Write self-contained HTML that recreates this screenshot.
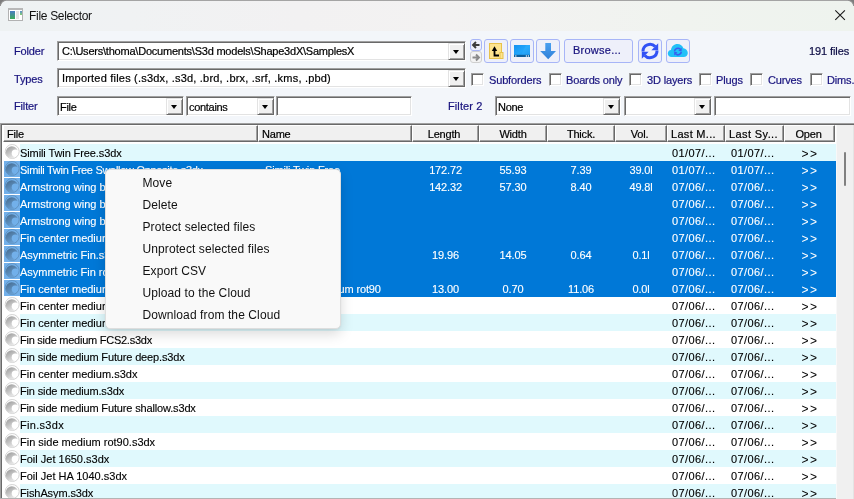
<!DOCTYPE html>
<html><head><meta charset="utf-8">
<style>
*{box-sizing:border-box;margin:0;padding:0}
html,body{width:854px;height:499px;overflow:hidden;background:#8e8e8e}
body{position:relative;font-family:"Liberation Sans",sans-serif;font-size:11px;color:#000}
.lbl,.sunk .t,.hc{-webkit-text-stroke:0.2px currentColor}
.row .c{-webkit-text-stroke:0.12px currentColor}
.a{position:absolute}
#win{position:absolute;left:0;top:0;width:854px;height:499px;background:#f3f6fa;overflow:hidden}
#title{position:absolute;left:0;top:0;width:854px;height:31px;border-top:1px solid #a4a4a4;background:linear-gradient(90deg,#eef2f3 0%,#f0f2f3 15%,#f2f1f2 35%,#f3f2f2 52%,#f0f3ef 80%,#eef3ee 100%)}
.lbl{position:absolute;color:#18137e;font-size:11px;letter-spacing:-0.15px;white-space:nowrap;line-height:13px}
.sunk{position:absolute;background:#fff;border-top:1px solid #a0a0a0;border-left:1px solid #a0a0a0;border-right:1px solid #fff;border-bottom:1px solid #fff;box-shadow:inset 1px 1px 0 #696969,inset -1px -1px 0 #e3e3e3}
.sunk .t{position:absolute;left:2px;top:4px;font-size:11px;letter-spacing:-0.3px;white-space:nowrap;line-height:13px}
.ddb{position:absolute;right:0;top:1px;width:17px;bottom:0;background:#f0f0f0;border-top:1px solid #e3e3e3;border-left:1px solid #e3e3e3;border-right:1px solid #696969;border-bottom:1px solid #696969;box-shadow:inset 1px 1px 0 #fff,inset -1px -1px 0 #a0a0a0}
.ddb:after{content:"";position:absolute;left:4px;top:6px;border-left:3.5px solid transparent;border-right:3.5px solid transparent;border-top:4px solid #000}
.btn{position:absolute;background:#eef0fa;border:1px solid #a7b5f7;border-radius:3px}
.chk{position:absolute;width:13px;height:13px;background:#fff;border-top:1px solid #a0a0a0;border-left:1px solid #a0a0a0;border-right:1px solid #fff;border-bottom:1px solid #fff;box-shadow:inset 1px 1px 0 #696969,inset -1px -1px 0 #e3e3e3}

#tbl{position:absolute;left:0px;top:123px;width:854px;height:376px;background:#fff;border-top:1px solid #a0a0a0;border-left:1px solid #a0a0a0;box-shadow:inset 1px 1px 0 #696969}
.hc{position:absolute;top:125px;height:17px;background:#f0f0f0;border-top:1px solid #fff;border-left:1px solid #fff;border-right:1px solid #696969;border-bottom:1px solid #696969;box-shadow:inset -1px -1px 0 #a0a0a0;font-size:11px;line-height:17px;letter-spacing:-0.2px;white-space:nowrap;color:#000}
#sb{position:absolute;left:836px;top:125px;width:18px;height:374px;background:#f0f0f0}
.row{position:absolute;left:3px;width:833px;height:17px}
.row .c{position:absolute;top:3px;font-size:11px;line-height:13px;letter-spacing:-0.15px;white-space:nowrap}
.row .cc{text-align:center}
.row .dt{letter-spacing:0.4px}
.row .gg{letter-spacing:1.4px;text-indent:0px;font-size:12px;top:3.5px;-webkit-text-stroke:0}
.rc{background:linear-gradient(90deg,#fff 17px,#e0f9fd 17px)}
.rw{background:#fff}
.rs{background:linear-gradient(90deg,#fff 17px,#0078d7 17px);color:#fff}
.row .ic{position:absolute;left:1px;top:0;width:16px;height:17px}
.rs .ic{background:#72b0ea;top:0;height:16px}
.row .ic svg{position:absolute;left:0;top:0}
.rs .ic svg{mix-blend-mode:multiply}

#menu{position:absolute;left:105px;top:169px;width:236px;height:160px;background:#f9f9f9;border:1px solid #dedede;border-radius:5px;box-shadow:0 5px 13px rgba(0,0,0,0.15),0 1px 2px rgba(0,0,0,0.05)}
#menu div{position:absolute;left:36.5px;font-size:12px;line-height:17px;letter-spacing:0.1px;color:#111;white-space:nowrap}
</style></head><body>
<svg width="0" height="0" style="position:absolute"><defs><linearGradient id="ig" x1="0" y1="0" x2="0.6" y2="1"><stop offset="0" stop-color="#969696"/><stop offset="1" stop-color="#ececec"/></linearGradient><mask id="wm"><rect width="16" height="16" fill="#fff"/><circle cx="11.4" cy="9.3" r="3.7" fill="#000"/></mask><g id="wico"><circle cx="8.2" cy="7.5" r="7" fill="#fff" stroke="#c8c8c8" stroke-width="0.8"/><circle cx="7.9" cy="8.3" r="6.1" fill="url(#ig)" mask="url(#wm)"/></g></defs></svg>
<div id="win">
  <div id="title"></div>
  <div class="a" style="left:0;top:0;width:6px;height:6px;background:radial-gradient(circle at 6px 6px,transparent 4.6px,#9c9c9c 5.2px,#7c7c7c 6.5px)"></div>
  <div class="a" style="left:848px;top:0;width:6px;height:6px;background:radial-gradient(circle at 0px 6px,transparent 4.6px,#9c9c9c 5.2px,#7c7c7c 6.5px)"></div>
  <!-- title icon -->
  <div class="a" style="left:8px;top:8px;width:15px;height:13px;background:#fff;border:1px solid #b2b2b2;border-top:2px solid #b8b8b8"></div>
  <div class="a" style="left:10px;top:11px;width:5px;height:8px;background:linear-gradient(180deg,#4a7cc4,#3cab58)"></div>
  <div class="a" style="left:16px;top:11px;width:3px;height:8px;background:#e4e4e4"></div>
  <div class="a" style="left:20px;top:11px;width:2px;height:4px;background:linear-gradient(180deg,#5a90d0,#86d070)"></div>
  <div class="a" style="left:29px;top:9px;font-size:12px;line-height:15px;letter-spacing:-0.3px;color:#111;white-space:nowrap">File Selector</div>
  <svg class="a" style="left:834px;top:9px" width="13" height="13" viewBox="0 0 13 13"><path d="M1.3 1.3L10.9 10.9M10.9 1.3L1.3 10.9" stroke="#1a1a1a" stroke-width="1.1"/></svg>

  <!-- row 1 -->
  <div class="lbl" style="left:14px;top:45px">Folder</div>
  <div class="sunk" style="left:57px;top:41px;width:409px;height:20px"><div class="t" style="left:4px;top:3px;letter-spacing:-0.22px">C:\Users\thoma\Documents\S3d models\Shape3dX\SamplesX</div><div class="ddb"></div></div>
  <div class="btn" style="left:470px;top:39px;width:12px;height:12px"></div>
  <div class="btn" style="left:470px;top:51px;width:12px;height:12px;border-color:#cfcfcf;background:#f3f3f3"></div>
  <div class="btn" style="left:484px;top:39px;width:24px;height:24px"></div>
  <div class="btn" style="left:510px;top:39px;width:24px;height:24px"></div>
  <div class="btn" style="left:536px;top:39px;width:24px;height:24px"></div>
  <div class="btn" style="left:564px;top:39px;width:69px;height:24px"></div>
  <div class="lbl" style="left:573px;top:44px;letter-spacing:0.25px">Browse...</div>
  <div class="btn" style="left:638px;top:39px;width:24px;height:24px"></div>
  <div class="btn" style="left:666px;top:39px;width:24px;height:24px"></div>

  <svg class="a" style="left:470px;top:39px" width="12" height="12" viewBox="0 0 12 12"><path d="M9.5 6H3.2M6 3L3 6L6 9" stroke="#3c3c3c" stroke-width="1.9" fill="none" stroke-linejoin="miter"/></svg>
  <svg class="a" style="left:470px;top:51px" width="12" height="12" viewBox="0 0 12 12"><path d="M2.5 6.5H8.8M6 3.5L9 6.5L6 9.5" stroke="#8a8a8a" stroke-width="1.9" fill="none"/></svg>
  <svg class="a" style="left:484px;top:39px" width="24" height="24" viewBox="0 0 24 24">
    <rect x="5.5" y="4.5" width="12" height="15" fill="#fde48f" stroke="#e7c24c" stroke-width="1"/>
    <rect x="16" y="13.5" width="3" height="6" fill="#fde48f" stroke="#e7c24c" stroke-width="1"/>
    <path d="M10.5 11V16.5H15" stroke="#000" stroke-width="1.8" fill="none"/>
    <path d="M7.8 12L10.5 7.2L13.2 12Z" fill="#000"/>
  </svg>
  <svg class="a" style="left:510px;top:39px" width="24" height="24" viewBox="0 0 24 24">
    <defs><linearGradient id="mg" x1="0" y1="0" x2="1" y2="1"><stop offset="0" stop-color="#1590f0"/><stop offset="0.5" stop-color="#22a6fb"/><stop offset="1" stop-color="#1288e8"/></linearGradient></defs>
    <rect x="4" y="6" width="16" height="12" fill="url(#mg)"/><path d="M11 16L16 6H20V16Z" fill="#3ab4ff" opacity="0.35"/>
    <rect x="4" y="15.8" width="16" height="2.2" fill="#0b5e9e"/>
    <rect x="5.2" y="16.4" width="1.2" height="1.2" fill="#fff"/><rect x="15.8" y="16.4" width="1.2" height="1.2" fill="#fff"/><rect x="17.8" y="16.4" width="1.2" height="1.2" fill="#fff"/>
  </svg>
  <svg class="a" style="left:536px;top:39px" width="24" height="24" viewBox="0 0 24 24">
    <defs><linearGradient id="dg" x1="0" y1="0" x2="0" y2="1"><stop offset="0" stop-color="#4aa0f0"/><stop offset="1" stop-color="#2f80d8"/></linearGradient></defs>
    <path d="M9.3 4H15V12H20L12.2 20.2L4.2 12H9.3Z" fill="url(#dg)"/>
  </svg>
  <svg class="a" style="left:638px;top:39px" width="24" height="24" viewBox="0 0 24 24">
    <path d="M5 12.5A7 7 0 0 1 17.2 7.6" stroke="#3152f5" stroke-width="3" fill="none"/>
    <path d="M20.2 4.2V11.2H13.4Z" fill="#3152f5"/>
    <path d="M19 11.5A7 7 0 0 1 6.8 16.4" stroke="#3152f5" stroke-width="3" fill="none"/>
    <path d="M3.8 19.8V12.8H10.6Z" fill="#3152f5"/>
  </svg>
  <svg class="a" style="left:666px;top:39px" width="24" height="24" viewBox="0 0 24 24">
    <path d="M5.5 18C3.3 18 1.8 16.4 1.8 14.5C1.8 12.6 3.2 11.1 5 11C5.3 7.6 8 5 11.5 5C14.3 5 16.6 6.7 17.4 9.2C19.8 9.5 21.8 11.5 21.8 13.9C21.8 16.2 20 18 17.6 18Z" fill="#22c0f7"/>
    <path d="M8.5 12.5A3.4 3.4 0 0 1 14.2 10.2" stroke="#3a5cf0" stroke-width="1.6" fill="none"/>
    <path d="M15.6 8.6V12H12.4Z" fill="#3a5cf0"/>
    <path d="M15.3 12.6A3.4 3.4 0 0 1 9.6 14.9" stroke="#3a5cf0" stroke-width="1.6" fill="none"/>
    <path d="M8.2 16.4V13H11.4Z" fill="#3a5cf0"/>
  </svg>
  <div class="lbl" style="left:809px;top:45px;letter-spacing:-0.1px;color:#0c0c44">191 files</div>
  <!-- row 2 -->
  <div class="lbl" style="left:14px;top:73px">Types</div>
  <div class="sunk" style="left:57px;top:68px;width:409px;height:20px"><div class="t" style="left:4px;top:3px;letter-spacing:0.2px">Imported files (.s3dx, .s3d, .brd, .brx, .srf, .kms, .pbd)</div><div class="ddb"></div></div>
  <div class="chk" style="left:471px;top:73px"></div><div class="lbl" style="left:489px;top:74px;letter-spacing:-0.15px">Subforders</div>
  <div class="chk" style="left:549px;top:73px"></div><div class="lbl" style="left:566px;top:74px;letter-spacing:-0.15px">Boards only</div>
  <div class="chk" style="left:629px;top:73px"></div><div class="lbl" style="left:647px;top:74px;letter-spacing:-0.15px">3D layers</div>
  <div class="chk" style="left:699px;top:73px"></div><div class="lbl" style="left:716px;top:74px;letter-spacing:-0.15px">Plugs</div>
  <div class="chk" style="left:750px;top:73px"></div><div class="lbl" style="left:768px;top:74px;letter-spacing:-0.15px">Curves</div>
  <div class="chk" style="left:810px;top:73px"></div><div class="lbl" style="left:827px;top:74px;letter-spacing:-0.15px">Dims.</div>
  <!-- row 3 -->
  <div class="lbl" style="left:14px;top:100px">Filter</div>
  <div class="sunk" style="left:57px;top:96px;width:127px;height:20px"><div class="t">File</div><div class="ddb"></div></div>
  <div class="sunk" style="left:186px;top:96px;width:89px;height:20px"><div class="t">contains</div><div class="ddb"></div></div>
  <div class="sunk" style="left:276px;top:96px;width:136px;height:20px"></div>
  <div class="lbl" style="left:448px;top:100px;letter-spacing:0.1px">Filter 2</div>
  <div class="sunk" style="left:495px;top:96px;width:126px;height:20px"><div class="t">None</div><div class="ddb"></div></div>
  <div class="sunk" style="left:624px;top:96px;width:88px;height:20px"><div class="ddb"></div></div>
  <div class="sunk" style="left:714px;top:96px;width:137px;height:20px"></div>
<div id="tbl"></div>
<div class="hc" style="left:3px;width:255px;text-align:left;padding-left:3px;">File</div>
<div class="hc" style="left:258px;width:154px;text-align:left;padding-left:3px;">Name</div>
<div class="hc" style="left:412px;width:67px;text-align:center;text-indent:-3px;">Length</div>
<div class="hc" style="left:479px;width:68px;text-align:center;">Width</div>
<div class="hc" style="left:547px;width:68px;text-align:center;">Thick.</div>
<div class="hc" style="left:615px;width:52px;text-align:center;text-indent:-3px;">Vol.</div>
<div class="hc" style="left:667px;width:58px;text-align:left;padding-left:3px;letter-spacing:0.3px;">Last M...</div>
<div class="hc" style="left:725px;width:59px;text-align:left;padding-left:3px;letter-spacing:0.4px;">Last Sy...</div>
<div class="hc" style="left:784px;width:51px;text-align:center;text-indent:-2px;">Open</div>
<div class="row rc" style="top:144px"><div class="ic"><svg width="16" height="16" viewBox="0 0 16 16"><use href="#wico"/></svg></div>
<span class="c" style="left:17px;letter-spacing:-0.1px">Simili Twin Free.s3dx</span>
<span class="c dt" style="left:669px">01/07/...</span>
<span class="c dt" style="left:728px">01/07/...</span>
<span class="c cc gg" style="left:781px;width:52px">&gt;&gt;</span>
</div>
<div class="row rs" style="top:161px"><div class="ic"><svg width="16" height="16" viewBox="0 0 16 16"><use href="#wico"/></svg></div>
<span class="c" style="left:17px;letter-spacing:-0.3px">Simili Twin Free Swallow Opposite.s3dx</span>
<span class="c" style="left:262px">Simili Twin Free</span>
<span class="c cc" style="left:409px;width:67px">172.72</span>
<span class="c cc" style="left:476px;width:68px">55.93</span>
<span class="c cc" style="left:544px;width:68px">7.39</span>
<span class="c cc" style="left:612px;width:52px">39.0l</span>
<span class="c dt" style="left:669px">01/07/...</span>
<span class="c dt" style="left:728px">01/07/...</span>
<span class="c cc gg" style="left:781px;width:52px">&gt;&gt;</span>
</div>
<div class="row rs" style="top:178px"><div class="ic"><svg width="16" height="16" viewBox="0 0 16 16"><use href="#wico"/></svg></div>
<span class="c" style="left:17px;letter-spacing:0px">Armstrong wing b</span>
<span class="c cc" style="left:409px;width:67px">142.32</span>
<span class="c cc" style="left:476px;width:68px">57.30</span>
<span class="c cc" style="left:544px;width:68px">8.40</span>
<span class="c cc" style="left:612px;width:52px">49.8l</span>
<span class="c dt" style="left:669px">07/06/...</span>
<span class="c dt" style="left:728px">07/06/...</span>
<span class="c cc gg" style="left:781px;width:52px">&gt;&gt;</span>
</div>
<div class="row rs" style="top:195px"><div class="ic"><svg width="16" height="16" viewBox="0 0 16 16"><use href="#wico"/></svg></div>
<span class="c" style="left:17px;letter-spacing:0px">Armstrong wing b</span>
<span class="c dt" style="left:669px">07/06/...</span>
<span class="c dt" style="left:728px">07/06/...</span>
<span class="c cc gg" style="left:781px;width:52px">&gt;&gt;</span>
</div>
<div class="row rs" style="top:212px"><div class="ic"><svg width="16" height="16" viewBox="0 0 16 16"><use href="#wico"/></svg></div>
<span class="c" style="left:17px;letter-spacing:0px">Armstrong wing b</span>
<span class="c dt" style="left:669px">07/06/...</span>
<span class="c dt" style="left:728px">07/06/...</span>
<span class="c cc gg" style="left:781px;width:52px">&gt;&gt;</span>
</div>
<div class="row rs" style="top:229px"><div class="ic"><svg width="16" height="16" viewBox="0 0 16 16"><use href="#wico"/></svg></div>
<span class="c" style="left:17px;letter-spacing:0px">Fin center medium</span>
<span class="c dt" style="left:669px">07/06/...</span>
<span class="c dt" style="left:728px">07/06/...</span>
<span class="c cc gg" style="left:781px;width:52px">&gt;&gt;</span>
</div>
<div class="row rs" style="top:246px"><div class="ic"><svg width="16" height="16" viewBox="0 0 16 16"><use href="#wico"/></svg></div>
<span class="c" style="left:17px;letter-spacing:0px">Asymmetric Fin.s3dx</span>
<span class="c cc" style="left:409px;width:67px">19.96</span>
<span class="c cc" style="left:476px;width:68px">14.05</span>
<span class="c cc" style="left:544px;width:68px">0.64</span>
<span class="c cc" style="left:612px;width:52px">0.1l</span>
<span class="c dt" style="left:669px">07/06/...</span>
<span class="c dt" style="left:728px">07/06/...</span>
<span class="c cc gg" style="left:781px;width:52px">&gt;&gt;</span>
</div>
<div class="row rs" style="top:263px"><div class="ic"><svg width="16" height="16" viewBox="0 0 16 16"><use href="#wico"/></svg></div>
<span class="c" style="left:17px;letter-spacing:0px">Asymmetric Fin rot90.s3dx</span>
<span class="c dt" style="left:669px">07/06/...</span>
<span class="c dt" style="left:728px">07/06/...</span>
<span class="c cc gg" style="left:781px;width:52px">&gt;&gt;</span>
</div>
<div class="row rs" style="top:280px"><div class="ic"><svg width="16" height="16" viewBox="0 0 16 16"><use href="#wico"/></svg></div>
<span class="c" style="left:17px;letter-spacing:0px">Fin center medium rot90.s3dx</span>
<span class="c" style="left:262px">Fin center medium rot90</span>
<span class="c cc" style="left:409px;width:67px">13.00</span>
<span class="c cc" style="left:476px;width:68px">0.70</span>
<span class="c cc" style="left:544px;width:68px">11.06</span>
<span class="c cc" style="left:612px;width:52px">0.0l</span>
<span class="c dt" style="left:669px">07/06/...</span>
<span class="c dt" style="left:728px">07/06/...</span>
<span class="c cc gg" style="left:781px;width:52px">&gt;&gt;</span>
</div>
<div class="row rw" style="top:297px"><div class="ic"><svg width="16" height="16" viewBox="0 0 16 16"><use href="#wico"/></svg></div>
<span class="c" style="left:17px;letter-spacing:0px">Fin center medium</span>
<span class="c dt" style="left:669px">07/06/...</span>
<span class="c dt" style="left:728px">07/06/...</span>
<span class="c cc gg" style="left:781px;width:52px">&gt;&gt;</span>
</div>
<div class="row rc" style="top:314px"><div class="ic"><svg width="16" height="16" viewBox="0 0 16 16"><use href="#wico"/></svg></div>
<span class="c" style="left:17px;letter-spacing:0px">Fin center medium</span>
<span class="c dt" style="left:669px">07/06/...</span>
<span class="c dt" style="left:728px">07/06/...</span>
<span class="c cc gg" style="left:781px;width:52px">&gt;&gt;</span>
</div>
<div class="row rw" style="top:331px"><div class="ic"><svg width="16" height="16" viewBox="0 0 16 16"><use href="#wico"/></svg></div>
<span class="c" style="left:17px;letter-spacing:-0.25px">Fin side medium FCS2.s3dx</span>
<span class="c dt" style="left:669px">07/06/...</span>
<span class="c dt" style="left:728px">07/06/...</span>
<span class="c cc gg" style="left:781px;width:52px">&gt;&gt;</span>
</div>
<div class="row rc" style="top:348px"><div class="ic"><svg width="16" height="16" viewBox="0 0 16 16"><use href="#wico"/></svg></div>
<span class="c" style="left:17px;letter-spacing:-0.15px">Fin side medium Future deep.s3dx</span>
<span class="c dt" style="left:669px">07/06/...</span>
<span class="c dt" style="left:728px">07/06/...</span>
<span class="c cc gg" style="left:781px;width:52px">&gt;&gt;</span>
</div>
<div class="row rw" style="top:365px"><div class="ic"><svg width="16" height="16" viewBox="0 0 16 16"><use href="#wico"/></svg></div>
<span class="c" style="left:17px;letter-spacing:0px">Fin center medium.s3dx</span>
<span class="c dt" style="left:669px">07/06/...</span>
<span class="c dt" style="left:728px">07/06/...</span>
<span class="c cc gg" style="left:781px;width:52px">&gt;&gt;</span>
</div>
<div class="row rc" style="top:382px"><div class="ic"><svg width="16" height="16" viewBox="0 0 16 16"><use href="#wico"/></svg></div>
<span class="c" style="left:17px;letter-spacing:-0.15px">Fin side medium.s3dx</span>
<span class="c dt" style="left:669px">07/06/...</span>
<span class="c dt" style="left:728px">07/06/...</span>
<span class="c cc gg" style="left:781px;width:52px">&gt;&gt;</span>
</div>
<div class="row rw" style="top:399px"><div class="ic"><svg width="16" height="16" viewBox="0 0 16 16"><use href="#wico"/></svg></div>
<span class="c" style="left:17px;letter-spacing:-0.15px">Fin side medium Future shallow.s3dx</span>
<span class="c dt" style="left:669px">07/06/...</span>
<span class="c dt" style="left:728px">07/06/...</span>
<span class="c cc gg" style="left:781px;width:52px">&gt;&gt;</span>
</div>
<div class="row rc" style="top:416px"><div class="ic"><svg width="16" height="16" viewBox="0 0 16 16"><use href="#wico"/></svg></div>
<span class="c" style="left:17px;letter-spacing:0.3px">Fin.s3dx</span>
<span class="c dt" style="left:669px">07/06/...</span>
<span class="c dt" style="left:728px">07/06/...</span>
<span class="c cc gg" style="left:781px;width:52px">&gt;&gt;</span>
</div>
<div class="row rw" style="top:433px"><div class="ic"><svg width="16" height="16" viewBox="0 0 16 16"><use href="#wico"/></svg></div>
<span class="c" style="left:17px;letter-spacing:0px">Fin side medium rot90.s3dx</span>
<span class="c dt" style="left:669px">07/06/...</span>
<span class="c dt" style="left:728px">07/06/...</span>
<span class="c cc gg" style="left:781px;width:52px">&gt;&gt;</span>
</div>
<div class="row rc" style="top:450px"><div class="ic"><svg width="16" height="16" viewBox="0 0 16 16"><use href="#wico"/></svg></div>
<span class="c" style="left:17px;letter-spacing:0px">Foil Jet 1650.s3dx</span>
<span class="c dt" style="left:669px">07/06/...</span>
<span class="c dt" style="left:728px">07/06/...</span>
<span class="c cc gg" style="left:781px;width:52px">&gt;&gt;</span>
</div>
<div class="row rw" style="top:467px"><div class="ic"><svg width="16" height="16" viewBox="0 0 16 16"><use href="#wico"/></svg></div>
<span class="c" style="left:17px;letter-spacing:0px">Foil Jet HA 1040.s3dx</span>
<span class="c dt" style="left:669px">07/06/...</span>
<span class="c dt" style="left:728px">07/06/...</span>
<span class="c cc gg" style="left:781px;width:52px">&gt;&gt;</span>
</div>
<div class="row rc" style="top:484px"><div class="ic"><svg width="16" height="16" viewBox="0 0 16 16"><use href="#wico"/></svg></div>
<span class="c" style="left:17px;letter-spacing:-0.1px">FishAsym.s3dx</span>
<span class="c dt" style="left:669px">07/06/...</span>
<span class="c dt" style="left:728px">07/06/...</span>
<span class="c cc gg" style="left:781px;width:52px">&gt;&gt;</span>
</div>
<div id="menu"><div style="top:5px">Move</div><div style="top:27px">Delete</div><div style="top:49px">Protect selected files</div><div style="top:71px">Unprotect selected files</div><div style="top:93px">Export CSV</div><div style="top:115px">Upload to the Cloud</div><div style="top:137px">Download from the Cloud</div></div>
<div class="a" style="left:0;top:498px;width:854px;height:1px;background:#b4b4b4"></div>
<div id="sb"><div class="a" style="left:0;top:0;width:1px;height:374px;background:#f8f8f8"></div><div class="a" style="left:17px;top:0;width:1px;height:374px;background:#e4e4e4"></div><div class="a" style="left:8px;top:27px;width:2px;height:34px;background:#808080;border-radius:1px"></div></div>
</div>
</body></html>
